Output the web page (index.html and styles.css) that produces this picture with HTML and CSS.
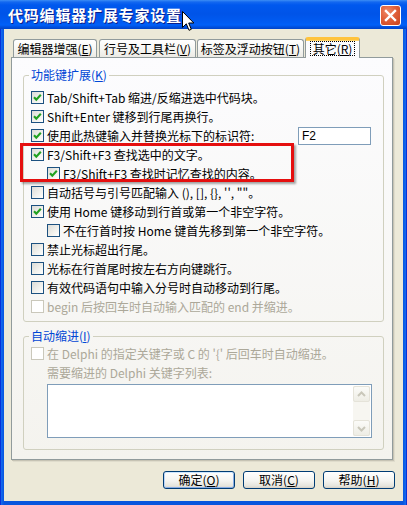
FILE: index.html
```html
<!DOCTYPE html>
<html lang="zh-CN">
<head>
<meta charset="utf-8">
<title>代码编辑器扩展专家设置</title>
<link rel="stylesheet" href="styles.css">
</head>
<body>
<div class="window">
  <div class="titlebar">
    <span class="title">代码编辑器扩展专家设置</span>
    <span class="close"><svg width="19" height="19" viewBox="0 0 19 19"><path d="M5 5 L14 14 M14 5 L5 14" stroke="#fff" stroke-width="2.4" stroke-linecap="square"/></svg></span>
  </div>
  <div class="client">
    <div class="tabs">
      <div class="tab t1">编辑器增强(<u>E</u>)</div>
      <div class="tab t2">行号及工具栏(<u>V</u>)</div>
      <div class="tab t3">标签及浮动按钮(<u>T</u>)</div>
      <div class="tab active"><span class="focus">其它(<u>R</u>)</span></div>
    </div>
    <div class="panel">
      <fieldset class="group g1">
        <legend>功能键扩展(<u>K</u>)</legend>
        <div class="row"><span class="cb on"><svg viewBox="0 0 11 11"><path d="M2 5.2 L4.3 7.6 L8.8 2.8" /></svg></span><span>Tab/Shift+Tab 缩进/反缩进选中代码块。</span></div>
        <div class="row"><span class="cb on"><svg viewBox="0 0 11 11"><path d="M2 5.2 L4.3 7.6 L8.8 2.8" /></svg></span><span>Shift+Enter 键移到行尾再换行。</span></div>
        <div class="row"><span class="cb on"><svg viewBox="0 0 11 11"><path d="M2 5.2 L4.3 7.6 L8.8 2.8" /></svg></span><span class="keylabel">使用此热键输入并替换光标下的标识符:</span><span class="field">F2</span></div>
        <div class="row"><span class="cb on"><svg viewBox="0 0 11 11"><path d="M2 5.2 L4.3 7.6 L8.8 2.8" /></svg></span><span>F3/Shift+F3 查找选中的文字。</span></div>
        <div class="row sub"><span class="cb on"><svg viewBox="0 0 11 11"><path d="M2 5.2 L4.3 7.6 L8.8 2.8" /></svg></span><span>F3/Shift+F3 查找时记忆查找的内容。</span></div>
        <div class="row"><span class="cb"></span><span>自动括号与引号匹配输入 (), [], {}, &#39;&#39;, &quot;&quot;。</span></div>
        <div class="row"><span class="cb on"><svg viewBox="0 0 11 11"><path d="M2 5.2 L4.3 7.6 L8.8 2.8" /></svg></span><span>使用 Home 键移动到行首或第一个非空字符。</span></div>
        <div class="row sub"><span class="cb"></span><span>不在行首时按 Home 键首先移到第一个非空字符。</span></div>
        <div class="row"><span class="cb"></span><span>禁止光标超出行尾。</span></div>
        <div class="row"><span class="cb"></span><span>光标在行首尾时按左右方向键跳行。</span></div>
        <div class="row"><span class="cb"></span><span>有效代码语句中输入分号时自动移动到行尾。</span></div>
        <div class="row disabled"><span class="cb"></span><span>begin 后按回车时自动输入匹配的 end 并缩进。</span></div>
      </fieldset>
      <fieldset class="group g2">
        <legend>自动缩进(<u>I</u>)</legend>
        <div class="row disabled"><span class="cb"></span><span>在 Delphi 的指定关键字或 C 的 &#39;{&#39; 后回车时自动缩进。</span></div>
        <div class="row disabled sub nocb"><span>需要缩进的 Delphi 关键字列表:</span></div>
        <div class="list">
          <div class="vscroll">
            <span class="sbtn"><svg width="15" height="15" viewBox="0 0 15 15"><path d="M4 9 L7.5 5.5 L11 9" fill="none" stroke="#C9C7BA" stroke-width="2"/></svg></span>
            <span class="strack"></span>
            <span class="sbtn"><svg width="15" height="15" viewBox="0 0 15 15"><path d="M4 6 L7.5 9.5 L11 6" fill="none" stroke="#C9C7BA" stroke-width="2"/></svg></span>
          </div>
        </div>
      </fieldset>
      <div class="highlight"></div>
    </div>
    <div class="buttons">
      <span class="btn default">确定(<u>O</u>)</span>
      <span class="btn">取消(<u>C</u>)</span>
      <span class="btn">帮助(<u>H</u>)</span>
    </div>
  </div>
  <svg class="cursor" width="13" height="21" viewBox="0 0 13 21"><path d="M0.5 0.5 L0.5 16.5 L4.3 12.8 L7 19.3 L9.3 18.3 L6.7 12 L11.8 12 Z" fill="#fff" stroke="#000" stroke-width="1"/></svg>
</div>
</body>
</html>
```

FILE: styles.css
```css
* { box-sizing: border-box; }
html, body { margin: 0; padding: 0; }
body {
  width: 407px;
  height: 505px;
  overflow: hidden;
  background: #0055E5;
  font-family: "Noto Sans CJK SC", "Liberation Sans", sans-serif;
  font-size: 12px;
  color: #000;
}
.window {
  position: relative;
  width: 407px;
  height: 505px;
  display: flex;
  flex-direction: column;
  background: linear-gradient(90deg, #0831D9 0, #0831D9 1px, #166AEE 1px, #0A5DE6 3px, #0855DD 4px, #0855DD 403px, #0A5DE6 404px, #166AEE 406px, #0831D9 406px);
}
.titlebar {
  height: 29px;
  flex: 0 0 29px;
  display: flex;
  align-items: center;
  justify-content: space-between;
  padding: 0 6px 0 8px;
  background: linear-gradient(to bottom, #3D8EF5 0, #1468F0 2px, #0058EE 5px, #0054E8 14px, #005BF2 22px, #0060F8 25px, #0050DE 27px, #0043C8 29px);
}
.title {
  color: #fff;
  font-weight: bold;
  font-size: 15px;
  letter-spacing: 0.8px;
  line-height: 18px;
  text-shadow: 1px 1px 0 #0A1E8A;
  margin-top: 1px;
}
.close {
  width: 21px;
  height: 21px;
  border: 1px solid #fff;
  border-radius: 3px;
  background: radial-gradient(circle at 35% 30%, #F08A68 0, #E0603A 45%, #C8421C 100%);
  display: flex;
  align-items: center;
  justify-content: center;
  margin-top: 2px;
}
.client {
  flex: 1;
  margin: 0 4px 4px 4px;
  background: #ECE9D8;
  padding: 8px 8px 0 7px;
  display: flex;
  flex-direction: column;
}
.tabs {
  display: flex;
  align-items: flex-end;
  height: 21px;
  margin-bottom: -1px;
  padding-left: 2px;
  position: relative;
  z-index: 1;
}
.tab {
  height: 18px;
  margin-bottom: 1px;
  border: 1px solid #919B9C;
  border-bottom: none;
  border-radius: 3px 3px 0 0;
  background: linear-gradient(#FFFFFF, #F7F7F4 50%, #ECEBE5);
  display: flex;
  align-items: center;
  justify-content: center;
  line-height: 14px;
  white-space: nowrap;
}
.t1 { width: 84px; }
.t2 { width: 97px; margin-left: 2px; }
.t3 { width: 107px; margin-left: 1px; }
.tab.active {
  width: 55px;
  height: 21px;
  margin-bottom: 0;
  margin-left: 1px;
  background: #FCFCFE;
  border-top: 3px solid #FFC33C;
  box-shadow: inset 0 1px 0 #FFD46A;
  padding-bottom: 2px;
}
.focus {
  border: 1px dotted #000;
  padding: 0 2px;
  line-height: 13px;
}
.panel {
  position: relative;
  width: 382px;
  border: 1px solid #919B9C;
  background: linear-gradient(#FCFCFE, #F4F3EE);
  padding: 10px 9px 9px 11px;
  box-shadow: 1px 1px 0 #C6C3B4, 2px 2px 0 #DFDCCC;
}
.group {
  margin: 0;
  width: 361px;
  border: 1px solid #D0D0BF;
  border-radius: 3px;
  padding: 6px 7px 5px 7px;
  min-width: 0;
}
.group legend {
  color: #0046D5;
  padding: 0 2px;
  margin-left: -2px;
  line-height: 14px;
}
.g2 {
  margin-top: 7px;
  padding: 1px 7px 11px 7px;
}
.row {
  display: flex;
  align-items: center;
  gap: 3px;
  height: 19px;
  line-height: 19px;
  white-space: nowrap;
}
.row.sub { padding-left: 16px; }
.row.disabled { color: #ACA899; }
.cb {
  flex: 0 0 13px;
  width: 13px;
  height: 13px;
  border: 1px solid #1C5180;
  background: linear-gradient(135deg, #DCDCD7 0, #F2F2EE 60%, #FFFFFF 100%);
  display: flex;
  align-items: center;
  justify-content: center;
}
.cb svg { width: 11px; height: 11px; }
.cb svg path { fill: none; stroke: #21A121; stroke-width: 2.1; }
.row.disabled .cb {
  border-color: #CAC8BB;
  background: #FFFFFF;
}
.keylabel { flex: 0 0 248px; }
.field {
  width: 73px;
  height: 18px;
  border: 1px solid #7F9DB9;
  background: #fff;
  padding-left: 3px;
  line-height: 16px;
  font-family: "Liberation Sans", sans-serif;
  font-size: 12px;
}
.list {
  margin: 2px 0 0 16px;
  width: 325px;
  height: 54px;
  border: 1px solid #7F9DB9;
  background: #fff;
  display: flex;
  justify-content: flex-end;
  padding: 1px;
}
.vscroll {
  width: 17px;
  display: flex;
  flex-direction: column;
  background: #F7F6F1;
}
.sbtn {
  height: 16px;
  border: 1px solid #E5E3D9;
  border-radius: 2px;
  background: linear-gradient(#FBFBF8, #EEEDE5);
  display: flex;
  align-items: center;
  justify-content: center;
}
.strack { flex: 1; }
.highlight {
  position: absolute;
  left: 8px;
  top: 85px;
  width: 274px;
  height: 39px;
  border: 3px solid #E50F0F;
  box-shadow: 2px 2px 2px rgba(0, 0, 0, 0.35);
}
.buttons {
  display: flex;
  justify-content: flex-end;
  gap: 8px;
  margin-top: 11px;
}
.btn {
  width: 72px;
  height: 18px;
  border: 1px solid #003C74;
  border-radius: 3px;
  background: linear-gradient(#FFFFFF, #F4F4F0 55%, #E5E4DC 88%, #D6D0C5);
  display: flex;
  align-items: center;
  justify-content: center;
  line-height: 14px;
}
.btn.default {
  box-shadow: inset 0 1px 0 #CEE7FF, inset 1px 0 0 #BCD4F6, inset -1px 0 0 #89ADE4, inset 0 -1px 0 #89ADE4;
}
.cursor {
  position: absolute;
  left: 182px;
  top: 11px;
}
```
